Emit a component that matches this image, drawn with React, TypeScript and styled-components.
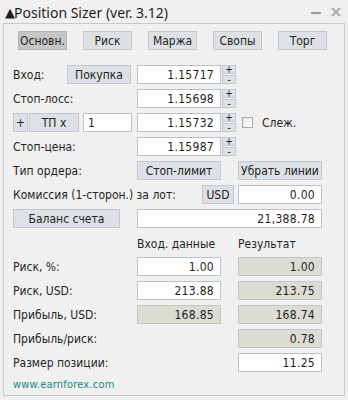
import styled, { createGlobalStyle } from 'styled-components';

const GlobalStyle = createGlobalStyle`
  html, body {
    margin: 0;
    padding: 0;
    background: #f0f0f0;
  }
  * {
    box-sizing: border-box;
  }
`;

const Window = styled.div`
  width: 348px;
  height: 400px;
  background: #f0f0f0;
  font-family: 'DejaVu Sans Condensed', 'DejaVu Sans', sans-serif;
  font-size: 12px;
  color: #231f1c;
  display: flex;
  flex-direction: column;
`;

const TitleBar = styled.div`
  height: 23px;
  display: flex;
  align-items: center;
  padding: 0 6px 0 5px;
`;

const Title = styled.div`
  flex: 1;
  font-family: 'Noto Sans', sans-serif;
  font-size: 14px;
  color: #1e1e1e;
  padding-top: 1px;
  display: flex;
  align-items: center;
`;

const Arrow = styled.span`
  font-family: 'DejaVu Sans', sans-serif;
  font-size: 13px;
  margin-right: -1px;
`;

const WinButton = styled.span`
  width: 12px;
  margin-left: 8px;
  display: flex;
  align-items: center;
  justify-content: center;
`;

const Panel = styled.div`
  margin: 0 3px 4px 3px;
  flex: 1;
  border: 1px solid #c8c8c8;
  padding: 7px 0 0 9px;
  display: flex;
  flex-direction: column;
`;

const Tabs = styled.div`
  display: flex;
  gap: 16px;
  padding-left: 5px;
  margin-bottom: 15px;
`;

const Tab = styled.div<{ $active?: boolean }>`
  width: 49px;
  height: 19px;
  border: 1px solid ${p => (p.$active ? '#b4b4b4' : '#c2c8ce')};
  background: ${p => (p.$active ? '#c6c6c6' : '#dde1e6')};
  display: flex;
  align-items: center;
  justify-content: center;
`;

const Rows = styled.div`
  display: flex;
  flex-direction: column;
  gap: 5px;
`;

const Row = styled.div`
  height: 19px;
  display: grid;
  grid-template-columns: 124px 84px 17px 84px;
  align-items: center;
`;

const Left = styled.div`
  display: flex;
  align-items: center;
  height: 19px;
  white-space: nowrap;
`;

const Label = styled.span<{ $w?: number }>`
  width: ${p => (p.$w ? `${p.$w}px` : 'auto')};
  white-space: nowrap;
`;

const Btn = styled.div<{ $w: number; $ml?: number }>`
  width: ${p => p.$w}px;
  margin-left: ${p => p.$ml || 0}px;
  height: 19px;
  border: 1px solid #c2c8ce;
  background: #dde1e6;
  display: flex;
  align-items: center;
  justify-content: center;
  white-space: nowrap;
`;

const Field = styled.div<{ $ro?: boolean; $w?: number; $left?: boolean; $ml?: number }>`
  width: ${p => (p.$w ? `${p.$w}px` : '84px')};
  margin-left: ${p => p.$ml || 0}px;
  height: 19px;
  border: 1px solid ${p => (p.$ro ? '#c6c6be' : '#b8c2ce')};
  background: ${p => (p.$ro ? '#dcdcd4' : '#ffffff')};
  display: flex;
  align-items: center;
  justify-content: ${p => (p.$left ? 'flex-start' : 'flex-end')};
  padding: 0 6px 0 4px;
  letter-spacing: 0.3px;
`;

const Spin = styled.div`
  width: 14px;
  height: 19px;
  margin-left: 1px;
  display: flex;
  flex-direction: column;
  gap: 1px;
`;

const SpinPart = styled.div`
  flex: 1;
  border: 1px solid #c2c8ce;
  background: #dde1e6;
  font-size: 10px;
  line-height: 7px;
  display: flex;
  align-items: center;
  justify-content: center;
`;

const Check = styled.div`
  display: flex;
  align-items: center;
  padding-left: 4px;
  gap: 9px;
`;

const Box = styled.span`
  width: 11px;
  height: 11px;
  border: 1px solid #a8a8a8;
  background: linear-gradient(135deg, #e6e6e6, #ffffff);
`;

const Header = styled.span`
  padding-top: 2px;
`;

const Link = styled.div`
  color: #168c7a;
  font-size: 11px;
  margin-top: 6px;
  letter-spacing: 0.2px;
`;

function Spinner() {
  return (
    <Spin>
      <SpinPart>+</SpinPart>
      <SpinPart>-</SpinPart>
    </Spin>
  );
}

export default function App() {
  return (
    <Window>
      <GlobalStyle />
      <TitleBar>
        <Title>
          <Arrow>▲</Arrow>Position Sizer (ver. 3.12)
        </Title>
        <WinButton>
          <svg width="10" height="10" viewBox="0 0 10 10">
            <rect x="0" y="5" width="10" height="2" fill="#9a9a9a" />
          </svg>
        </WinButton>
        <WinButton>
          <svg width="10" height="10" viewBox="0 0 10 10">
            <path d="M1 1 L9 9 M9 1 L1 9" stroke="#b0b0b0" strokeWidth="2.4" />
          </svg>
        </WinButton>
      </TitleBar>
      <Panel>
        <Tabs>
          <Tab $active>Основн.</Tab>
          <Tab>Риск</Tab>
          <Tab>Маржа</Tab>
          <Tab>Свопы</Tab>
          <Tab>Торг</Tab>
        </Tabs>
        <Rows>
          <Row>
            <Left>
              <Label $w={54}>Вход:</Label>
              <Btn $w={64}>Покупка</Btn>
            </Left>
            <Field>1.15717</Field>
            <Spinner />
          </Row>
          <Row>
            <Left>
              <Label>Стоп-лосс:</Label>
            </Left>
            <Field>1.15698</Field>
            <Spinner />
          </Row>
          <Row>
            <Left>
              <Btn $w={15}>+</Btn>
              <Btn $w={50} $ml={1}>ТП x</Btn>
              <Field $w={49} $ml={4} $left>1</Field>
            </Left>
            <Field>1.15732</Field>
            <Spinner />
            <Check>
              <Box />
              <span>Слеж.</span>
            </Check>
          </Row>
          <Row>
            <Left>
              <Label>Стоп-цена:</Label>
            </Left>
            <Field>1.15987</Field>
            <Spinner />
          </Row>
          <Row>
            <Left>
              <Label>Тип ордера:</Label>
            </Left>
            <Btn $w={84}>Стоп-лимит</Btn>
            <span />
            <Btn $w={84}>Убрать линии</Btn>
          </Row>
          <Row>
            <Left style={{ gridColumn: '1 / 4' }}>
              <Label $w={189}>Комиссия (1-сторон.) за лот:</Label>
              <Btn $w={32}>USD</Btn>
            </Left>
            <Field>0.00</Field>
          </Row>
          <Row>
            <Left>
              <Btn $w={107}>Баланс счета</Btn>
            </Left>
            <Field $w={185} style={{ gridColumn: '2 / 5' }}>21,388.78</Field>
          </Row>
          <Row>
            <span />
            <Header>Вход. данные</Header>
            <span />
            <Header>Результат</Header>
          </Row>
          <Row>
            <Label>Риск, %:</Label>
            <Field>1.00</Field>
            <span />
            <Field $ro>1.00</Field>
          </Row>
          <Row>
            <Label>Риск, USD:</Label>
            <Field>213.88</Field>
            <span />
            <Field $ro>213.75</Field>
          </Row>
          <Row>
            <Label>Прибыль, USD:</Label>
            <Field $ro>168.85</Field>
            <span />
            <Field $ro>168.74</Field>
          </Row>
          <Row>
            <Label>Прибыль/риск:</Label>
            <span />
            <span />
            <Field $ro>0.78</Field>
          </Row>
          <Row>
            <Label>Размер позиции:</Label>
            <span />
            <span />
            <Field>11.25</Field>
          </Row>
        </Rows>
        <Link>www.earnforex.com</Link>
      </Panel>
    </Window>
  );
}
